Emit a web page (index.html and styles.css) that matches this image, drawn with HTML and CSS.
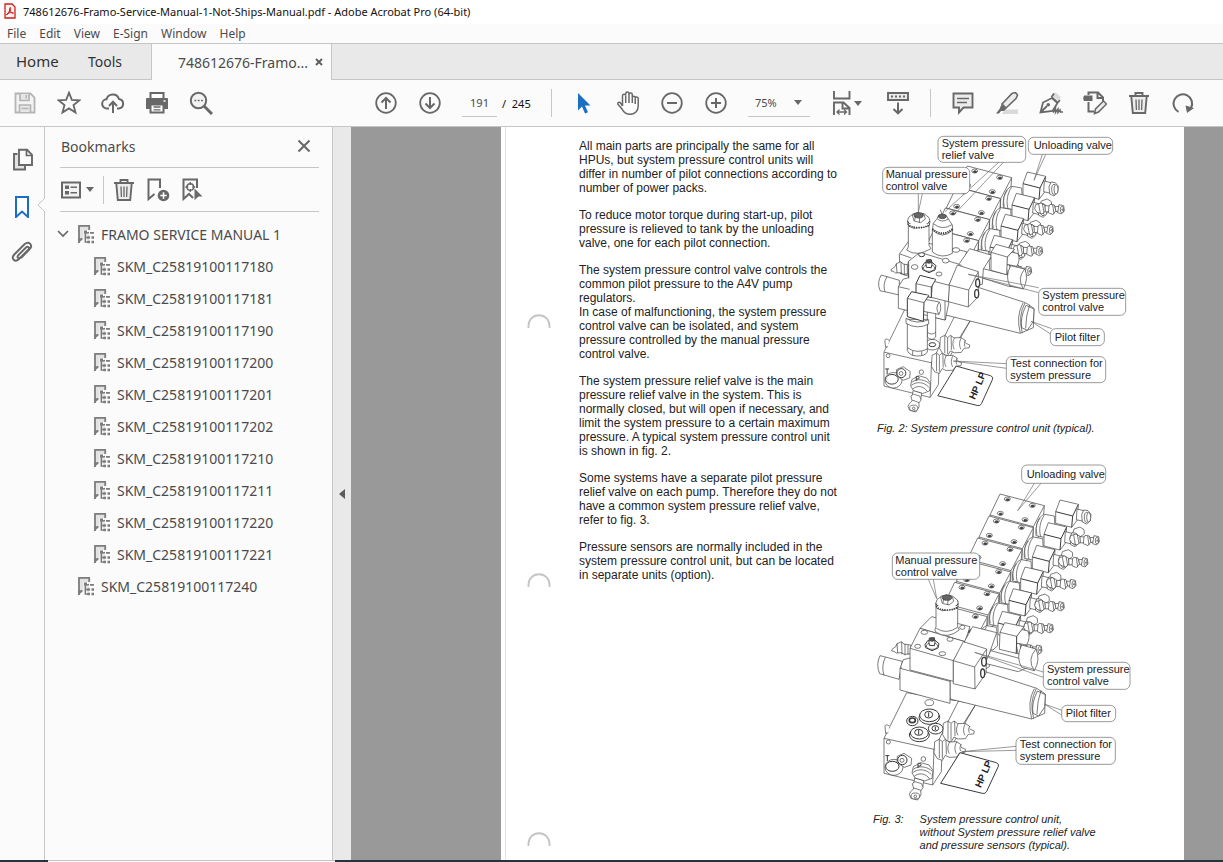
FILE: index.html
```html
<!DOCTYPE html>
<html lang="en">
<head>
<meta charset="utf-8">
<title>748612676-Framo-Service-Manual-1-Not-Ships-Manual.pdf - Adobe Acrobat Pro (64-bit)</title>
<link rel="stylesheet" href="styles.css">
</head>
<body>
<svg class="defs" aria-hidden="true">
  <defs>
    <symbol id="i-node" viewBox="0 0 18 20">
      <path d="M2 1.500h10v16L8 14l-6 4z" fill="#e3e3e3"/>
      <path d="M2 19V1.800h10.200V6" fill="none" stroke="#7c7c7c" stroke-width="1.800"/>
      <path d="M1 19.600v-5L5.500 14v1.500z" fill="#7c7c7c"/>
      <path d="M6.500 6h5v3.500H9v9.500H6.500z" fill="#fbfbfb"/>
      <path d="M8.300 8v10h3M8.300 13.500h3M9 8.700h3" fill="none" stroke="#7c7c7c" stroke-width="1.500"/>
      <path d="M7 6.500h3v3H7zM13 8h4v1.700h-4zM10.500 12.200h2.500v2.500h-2.500zM14.500 12.200H17v2.500h-2.500zM10.500 16.800h2.500v2.500h-2.500zM14.500 16.800H17v2.500h-2.500z" fill="#7c7c7c"/>
    </symbol>
    <symbol id="i-trash" viewBox="0 0 24 24">
      <path d="M4.500 5.500h15L18.300 22H5.700z" fill="#ededed"/>
      <path d="M2 5h20M8.500 4.500V2h7v2.500M4.300 5.500 5.800 22h12.400l1.500-16.500" fill="none" stroke="#686868" stroke-width="1.900"/>
      <path d="m9 8.500.4 10.500M12 8.500V19M15 8.500 14.600 19" fill="none" stroke="#686868" stroke-width="1.300"/>
    </symbol>
    <g id="hole"><ellipse rx="9" ry="6"/><ellipse cx="1" cy="2" rx="5" ry="3" fill="#444"/></g>
    <g id="fitting">
      <path d="M0-12 16-17 28-10 30 7 19 16 4 11-3 0z"/>
      <path d="m9-14 5 28M20-15l5 26"/>
      <path d="M28-9 44-8l4 16-19 2z"/>
      <path d="m43-13 13 2 5 17-9 12-14-6 2-20z"/>
      <path d="m51-12 4 28"/>
      <path d="m58-6 15-1 4 11-16 5z"/>
      <path d="m70-12 14 3 2 16-9 9-11-4z"/>
      <ellipse cx="79" cy="3" rx="5" ry="10"/><circle cx="80" cy="3" r="2"/>
    </g>
    <g id="slab">
      <path d="M390 117 523 152 518 218 488 282 355 247 360 180z"/>
      <path d="m523 152-33 63-130-35m130 35-2 66"/>
      <use href="#hole" x="412" y="132"/><use href="#hole" x="487" y="151"/>
      <use href="#hole" x="391" y="175"/><use href="#hole" x="465" y="194"/>
    </g>
    <g id="coil">
      <path d="m524 178 29 5 3 55-14 13-44-9c-2-30 5-58 26-64z"/>
      <path d="M510 190c-12 16-13 33-9 49m22-58c-13 17-17 43-11 64"/>
      <path d="m612 222 18-6 12 8 1 12-18 14-19-5z"/>
      <path d="M570 135 625 148 622 195 605 217 557 205V170z"/>
      <path d="m557 170 51 13 17-35m-17 35-3 34" stroke-width="3"/>
      <path d="m621 162 20 5-1 32-21-5z"/>
      <path d="m641 165 13 2 9 11-2 19-11 10-13-6-2-22z"/>
      <ellipse cx="650" cy="187" rx="7" ry="15"/><ellipse cx="656" cy="187" rx="6" ry="14"/>
    </g>
    <g id="port">
      <path d="m-42-20 14-7 9 7 9-7 11 8 22-1 13 8 1 9 14 6-2 9-16 1-9 13-22 1-12-6-9 15-15-5-10-17z"/>
      <path d="M-28-26v55M-19-19v50M-8-26l1 44M3-19c-7 11-7 24-1 35M25-20c-8 12-8 25-2 36M38-12c-5 6-5 14-2 20"/>
    </g>
    <g id="drain">
      <path d="m-26-24 22-12 25 7 12 16-3 24-22 8-28-8-10-16z"/>
      <path d="M-26-16C-9-29 17-24 31-10M-28-6C-10-20 14-16 28 0M-24 6C-10-8 12-4 23 13"/>
      <path d="m-22 10 27 8-3 21-28-7z"/>
      <path d="m-29 27 8-6 20 6 4 12-8 11-19-5z"/>
      <path d="m-34 51 11-11 19 7 1 13-10 16-20-5-5-12z"/>
      <ellipse cx="-20" cy="64" rx="13" ry="9"/><circle cx="-20" cy="65" r="4"/>
    </g>
    <g id="manifold">
      <path d="M212 490 270 398 379 428q9 4 6 11L350 514q-4 9-13 6z" stroke-width="3"/>
      <path d="M110 218 318 252 262 340 192 388 188 495 42 460V355z"/>
      <path d="m42 355 150 33 76-150m50 14-70 120M188 495l26-40 2-70"/>
      <path d="M58 318q-12-8-13 2l2 20 8-2"/>
      <circle cx="55" cy="366" r="6"/><circle cx="160" cy="417" r="7"/>
      <ellipse cx="72" cy="442" rx="27" ry="24"/><ellipse cx="67" cy="439" rx="20" ry="15" stroke-width="3"/>
      <path d="m82 409 20-9 23 15-2 20-20 7-22-14z"/>
      <circle cx="97" cy="420" r="14" stroke-width="3"/><circle cx="96" cy="421" r="6"/>
      <use href="#port" x="262" y="330"/><use href="#port" x="236" y="385"/>
      <use href="#drain" x="156" y="464"/>
      <path d="M46 407h12m-6 0v16M144 444v-14h7q5 5 0 8h-7" stroke-width="3"/>
    </g>
    <g id="cap">
      <path d="M-34-4-30-16-15-28 16-27 31-15 34-3 31 10-14 17-30 10z"/>
      <path d="M-33-5C-32 13 31 14 33-5" stroke-width="3"/>
      <path d="M-32 3C-28 19 28 19 32 3" stroke-width="5" stroke-dasharray="4 3"/>
      <path d="m-19-23 17-8 18 6 4 14-14 11-20-5z"/><ellipse cy="-22" rx="14" ry="8" fill="#666"/>
      <path d="m-12-6 2-14m12 20 1-15"/>
    </g>
    <g id="plug"><path d="m-21-2 8-12 22-1 12 10-3 13-18 8-19-9z" stroke-width="3"/><ellipse cy="2" rx="17" ry="10"/><path d="M-9-9-8-22 7-23 9-9 7 1-8 0z" stroke-width="3"/><ellipse cy="-17" rx="7" ry="5" fill="#555"/></g>
    <g id="sidenut"><path d="m-28-5 11-8 4-9 14-6 6 7 21 3 2 26-21 2-10-5-14 1-7-5-7-1z"/><path d="m-13-22 2 28M1-27l1 37m9-31v34m9-31v29"/></g>
  </defs>
</svg>

<div class="app">
  <header class="titlebar">
    <svg class="app-icon" viewBox="0 0 12 16"><path d="M1 1h7l3 3v11H1z" fill="#fff3f1" stroke="#c9221b" stroke-width="1.300"/><path d="M2.500 11.500C5 10 6 7.500 5.800 5c0-1 1.200-.8.8.5C6.300 8.500 3.500 12 2.700 11.800 2 10.500 6.500 9 9.300 9.800c.7.600-.4 1-1.300.2C6.700 9 6 7.500 5.800 6" fill="none" stroke="#c9221b"/></svg>
    <span>748612676-Framo-Service-Manual-1-Not-Ships-Manual.pdf - Adobe Acrobat Pro (64-bit)</span>
  </header>
  <nav class="menubar" aria-label="Application menu">
    <button>File</button><button>Edit</button><button>View</button><button>E-Sign</button><button>Window</button><button>Help</button>
  </nav>
  <div class="tabs">
    <button class="tab-link">Home</button><button class="tab-link">Tools</button>
    <div class="tab-open"><span>748612676-Framo...</span>
      <button class="tab-close" aria-label="Close tab"><svg viewBox="0 0 8 8"><path d="m1 1 6 6m0-6L1 7" stroke="#5c5c5c" stroke-width="1.800"/></svg></button></div>
    <div class="tab-rest"></div>
  </div>

  <div class="toolbar" role="toolbar">
    <div class="tools">
      <button aria-label="Save"><svg viewBox="0 0 24 24"><path d="M2.500 2.500h15l4 4v15h-19z" fill="#f3f3f3" stroke="#b5b5b5" stroke-width="1.800"/><path d="M7 3v6.500h9V3M6.500 21v-7h11v7" fill="#e6e6e6" stroke="#b5b5b5" stroke-width="1.700"/><path d="M13.200 4v3.500M8.500 17.500h7" stroke="#b5b5b5" stroke-width="1.500"/></svg></button>
      <button aria-label="Star"><svg viewBox="0 0 24 24"><path d="m12 1.700 2.800 7.200 7.700.4-6 4.800 2 7.500-6.500-4.200-6.500 4.200 2-7.500-6-4.800 7.700-.4z" fill="none" stroke="#686868" stroke-width="1.800"/></svg></button>
      <button aria-label="Upload"><svg viewBox="0 0 24 24"><path d="M8 17.500H6A4.600 4.600 0 0 1 5.500 8.300 6.500 6.500 0 0 1 18 8a4.800 4.800 0 0 1 0 9.500h-2M12 22V11m-4 4 4-4.200 4 4.200" fill="none" stroke="#686868" stroke-width="2"/></svg></button>
      <button aria-label="Print"><svg viewBox="0 0 24 24"><path d="M1 8q0-1 1-1h20q1 0 1 1v10h-4v-5H5v5H1z" fill="#686868"/><path d="M5.500 7V2h13v5M5.500 13.500h13v8h-13z" fill="#fff" stroke="#686868" stroke-width="2"/><path d="M8.500 16h7m-7 2.800h7" stroke="#686868" stroke-width="1.300"/><path d="M18.500 10h2" stroke="#fff" stroke-width="1.500"/></svg></button>
      <button aria-label="Find"><svg viewBox="0 0 24 24"><circle cx="9.500" cy="9.500" r="7.700" fill="#f2f2f2" stroke="#686868" stroke-width="2"/><path d="m15 15 8 8" stroke="#686868" stroke-width="3"/><path d="M5.500 9.500h8.500" stroke="#686868" stroke-width="1.700" stroke-dasharray="1.800 1.500"/></svg></button>
    </div>
    <div class="tools tools-page">
      <button aria-label="Previous page"><svg viewBox="0 0 24 24"><circle cx="12" cy="12" r="9.800" fill="none" stroke="#686868" stroke-width="1.800"/><path d="M12 18V7.500M7.500 11.500 12 7l4.500 4.500" fill="none" stroke="#686868" stroke-width="2"/></svg></button>
      <button aria-label="Next page"><svg viewBox="0 0 24 24"><circle cx="12" cy="12" r="9.800" fill="none" stroke="#686868" stroke-width="1.800"/><path d="M12 6v10.500M7.500 12.500 12 17l4.500-4.500" fill="none" stroke="#686868" stroke-width="2"/></svg></button>
    </div>
    <input class="page-number" type="text" value="191" aria-label="Page number">
    <span class="page-total">/&nbsp; 245</span>
    <div class="divider"></div>
    <div class="tools">
      <button aria-label="Select"><svg viewBox="0 0 24 24"><path d="M6 2v17.500l4-4 3 7 3-1.300-3-6.700h5.500z" fill="#1b6ec2"/></svg></button>
      <button aria-label="Hand"><svg viewBox="0 0 24 24"><path d="M6.500 15V4.800a1.600 1.600 0 0 1 3.200 0V2.700a1.600 1.600 0 0 1 3.300 0v1a1.600 1.600 0 0 1 3.300 0v2.500a1.600 1.600 0 0 1 3 0L19 7.500a1.600 1.600 0 0 1 3.200.3V15c0 5-3.500 8.300-8 8.300-4 0-6.200-1.800-8-5L1.700 13c0-2 2-2.200 3-.8L6.500 15M9.700 5v7M13 3.500V12m3.300-8v8m2.900-6v7" fill="#fff" stroke="#686868" stroke-width="1.500"/></svg></button>
      <button aria-label="Zoom out"><svg viewBox="0 0 24 24"><circle cx="12" cy="12" r="9.800" fill="none" stroke="#686868" stroke-width="1.800"/><path d="M7 12h10" stroke="#686868" stroke-width="2"/></svg></button>
      <button aria-label="Zoom in"><svg viewBox="0 0 24 24"><circle cx="12" cy="12" r="9.800" fill="none" stroke="#686868" stroke-width="1.800"/><path d="M7 12h10M12 7v10" stroke="#686868" stroke-width="2"/></svg></button>
    </div>
    <label class="zoom"><select aria-label="Zoom level"><option>75%</option><option>100%</option></select><svg class="caret" viewBox="0 0 8 5"><path d="M0 0h8L4 5z" fill="#686868"/></svg></label>
    <div class="tools tools-view">
      <button class="with-caret" aria-label="Fit page"><svg viewBox="0 0 24 24"><path d="M4 0v7.500h15.500V0" fill="none" stroke="#686868" stroke-width="1.900"/><path d="M4 24V11.500h9.500l6 5.500v7M12.500 12v5.500h6.500" fill="none" stroke="#686868" stroke-width="1.900"/><path d="M7 21h9.500M9.500 18.500 7 21l2.500 2.500m4.500-5 2.500 2.500-2.500 2.500" fill="none" stroke="#686868" stroke-width="1.300"/></svg><svg class="caret" viewBox="0 0 8 5"><path d="M0 0h8L4 5z" fill="#686868"/></svg></button>
      <button aria-label="Scrolling"><svg viewBox="0 0 24 24"><path d="M2 2h20v7H2z" fill="#ececec" stroke="#686868" stroke-width="1.900"/><path d="M5 5.500h14" stroke="#686868" stroke-width="2" stroke-dasharray="2 2"/><path d="M12 11.500V22m-4.500-4L12 22.300l4.500-4.300" fill="none" stroke="#686868" stroke-width="2"/></svg></button>
    </div>
    <div class="divider divider-end"></div>
    <div class="tools">
      <button aria-label="Comment"><svg viewBox="0 0 24 24"><path d="M2.500 2.500h19v14h-9L8 21.500v-5H2.500z" fill="#ececec" stroke="#686868" stroke-width="1.900"/><path d="M6 7.500h12M6 11.500h10" stroke="#686868" stroke-width="1.500"/></svg></button>
      <button aria-label="Highlight"><svg viewBox="0 0 24 24"><path d="M10 18.500h13V23H7z" fill="#d9d9d9"/><path d="M7 13 17 2.500q4-2 5.500 1.500L21 7.500 11 17z" fill="#ececec" stroke="#686868" stroke-width="1.600"/><path d="m6.500 13.500 5 4L9 20H6l-2 2.500H1L4.500 18z" fill="#686868"/></svg></button>
      <button aria-label="Sign"><svg viewBox="0 0 24 24"><path d="m14 5 2-4 6 5-3 4z" fill="#dcdcdc"/><path d="M1.500 21.500 4 11.500l9-4.500 5.500 5-5 8zM1.500 21.500 8 15M12.500 6 15 2.500M18 12.500 21 9M12.500 6l6.500 6" fill="none" stroke="#686868" stroke-width="1.800"/><circle cx="9.300" cy="13.800" r="1.800" fill="#686868"/><path d="m14 21.500 2.500-4v4l2.500-3.500v3.500l2-2.500.5 2H24" fill="none" stroke="#686868" stroke-width="1.500"/></svg></button>
      <button aria-label="Edit PDF"><svg viewBox="0 0 24 24"><path d="M5.500 4V1.500h9.500l5 5V10M5.500 11v9.500H11M14.500 1.500V7h5.500" fill="none" stroke="#686868" stroke-width="2"/><path d="M1 4.500h8.500v5.500H1q-1.500-2.700 0-5.500z" fill="#686868"/><path d="m11.500 22.500 1-4.500 8-8 3 3-8 8z" fill="#eee" stroke="#686868" stroke-width="1.500"/></svg></button>
      <button aria-label="Delete"><svg viewBox="0 0 24 24"><use href="#i-trash"/></svg></button>
      <button aria-label="Rotate"><svg viewBox="0 0 24 24"><path d="M7.500 20.800A9.300 9.300 0 1 1 20 17" fill="none" stroke="#686868" stroke-width="2"/><path d="m14.500 14.500 8.500 2.500-7 5z" fill="#686868"/></svg></button>
    </div>
  </div>

  <main class="workspace">
    <nav class="rail" aria-label="Navigation panes">
      <button aria-label="Page thumbnails"><svg viewBox="0 0 24 24"><path d="M7.500 6H4v15.500h11V18" fill="#e3e3e3" stroke="#686868" stroke-width="1.900"/><path d="M9 1.800h8l5 5V17H9z" fill="#fbfbfb" stroke="#686868" stroke-width="1.900"/><path d="M16.500 2v5.500H22" fill="none" stroke="#686868" stroke-width="1.700"/></svg></button>
      <button class="rail-active" aria-label="Bookmarks"><svg viewBox="0 0 24 24"><path d="M6 3h12v20l-6-5.500L6 23z" fill="#fff" stroke="#1b6ec2" stroke-width="2"/></svg><svg class="notch" viewBox="0 0 8 16"><path d="M8 1 1 8l7 7" fill="#fbfbfb" stroke="#c6c6c6"/></svg></button>
      <button aria-label="Attachments"><svg viewBox="0 0 24 24"><path d="m8 15.500 8-8c2-2 4 .5 2.300 2.300L9 19c-4 4-8.500-.5-4.700-4.500L14.500 4.300c4.500-4 9 1 5 5L11 18M8 15.500c-1.500 2 .8 3.500 2.300 2" fill="none" stroke="#686868" stroke-width="1.900"/></svg></button>
    </nav>

    <aside class="panel">
      <div class="panel-head"><h2>Bookmarks</h2><button aria-label="Close panel"><svg viewBox="0 0 14 14"><path d="m1.500 1.500 11 11m0-11-11 11" stroke="#686868" stroke-width="2"/></svg></button></div>
      <div class="panel-tools">
        <button class="options" aria-label="Options"><svg viewBox="0 0 24 24"><path d="M3 4.500h18v15H3z" fill="#f3f3f3" stroke="#686868" stroke-width="2"/><path d="M6 7.500h4v3.500H6zm0 5.500h4v3.500H6z" fill="#686868"/><path d="M11.500 9.300H18m-6.500 5.500H18" stroke="#686868" stroke-width="1.600"/></svg><svg class="caret" viewBox="0 0 8 5"><path d="M0 0h8L4 5z" fill="#686868"/></svg></button>
        <button aria-label="Delete bookmark"><svg viewBox="0 0 24 24"><use href="#i-trash"/></svg></button>
        <button aria-label="New bookmark"><svg viewBox="0 0 24 24"><path d="M14 10V1.500H2.500V21l6-5" fill="none" stroke="#686868" stroke-width="2"/><circle cx="17.500" cy="17.500" r="5.800" fill="#686868"/><path d="M14.300 17.500h6.400M17.500 14.300v6.400" stroke="#fff" stroke-width="1.600"/></svg></button>
        <button aria-label="Find current bookmark"><svg viewBox="0 0 24 24"><path d="M17 10V1.500H3.500V21l5.500-5 4 4" fill="none" stroke="#686868" stroke-width="2"/><circle cx="10.300" cy="9" r="3.300" fill="#fff" stroke="#686868" stroke-width="1.500"/><path d="M10.300 4v3m0 4v3M5.300 9h3m4 0h3" stroke="#686868" stroke-width="1.300"/><path d="m14.500 10.500 8 8h-4l-4 3.800z" fill="#686868"/></svg></button>
      </div>
      <ul class="tree">
        <li>
          <div class="node"><button class="twist" aria-label="Collapse"><svg viewBox="0 0 12 8"><path d="m1 1 5 5 5-5" fill="none" stroke="#686868" stroke-width="1.700"/></svg></button><svg class="node-icon"><use href="#i-node"/></svg><a href="#">FRAMO SERVICE MANUAL 1</a></div>
          <ul>
            <li class="node"><svg class="node-icon"><use href="#i-node"/></svg><a href="#">SKM_C25819100117180</a></li>
            <li class="node"><svg class="node-icon"><use href="#i-node"/></svg><a href="#">SKM_C25819100117181</a></li>
            <li class="node"><svg class="node-icon"><use href="#i-node"/></svg><a href="#">SKM_C25819100117190</a></li>
            <li class="node"><svg class="node-icon"><use href="#i-node"/></svg><a href="#">SKM_C25819100117200</a></li>
            <li class="node"><svg class="node-icon"><use href="#i-node"/></svg><a href="#">SKM_C25819100117201</a></li>
            <li class="node"><svg class="node-icon"><use href="#i-node"/></svg><a href="#">SKM_C25819100117202</a></li>
            <li class="node"><svg class="node-icon"><use href="#i-node"/></svg><a href="#">SKM_C25819100117210</a></li>
            <li class="node"><svg class="node-icon"><use href="#i-node"/></svg><a href="#">SKM_C25819100117211</a></li>
            <li class="node"><svg class="node-icon"><use href="#i-node"/></svg><a href="#">SKM_C25819100117220</a></li>
            <li class="node"><svg class="node-icon"><use href="#i-node"/></svg><a href="#">SKM_C25819100117221</a></li>
          </ul>
        </li>
        <li class="node node-root"><svg class="node-icon"><use href="#i-node"/></svg><a href="#">SKM_C25819100117240</a></li>
      </ul>
    </aside>

    <button class="gutter" aria-label="Collapse panel"><svg viewBox="0 0 6 10"><path d="M6 0v10L0 5z" fill="#5c5c5c"/></svg></button>

    <section class="viewer">
      <article class="sheet">
        <div class="binding">
          <svg viewBox="0 0 24 14"><path d="M1.500 14C0-3 24-3 22.500 14" fill="none" stroke="#c4c4c4" stroke-width="1.800"/></svg>
          <svg viewBox="0 0 24 14"><path d="M1.500 14C0-3 24-3 22.500 14" fill="none" stroke="#c4c4c4" stroke-width="1.800"/></svg>
          <svg viewBox="0 0 24 14"><path d="M1.500 14C0-3 24-3 22.500 14" fill="none" stroke="#c4c4c4" stroke-width="1.800"/></svg>
        </div>
        <div class="copy">
          <p>All main parts are principally the same for all<br>HPUs, but system pressure control units will<br>differ in number of pilot connections according to<br>number of power packs.</p>
          <p>To reduce motor torque during start-up, pilot<br>pressure is relieved to tank by the unloading<br>valve, one for each pilot connection.</p>
          <p>The system pressure control valve controls the<br>common pilot pressure to the A4V pump<br>regulators.<br>In case of malfunctioning, the system pressure<br>control valve can be isolated, and system<br>pressure controlled by the manual pressure<br>control valve.</p>
          <p>The system pressure relief valve is the main<br>pressure relief valve in the system. This is<br>normally closed, but will open if necessary, and<br>limit the system pressure to a certain maximum<br>pressure. A typical system pressure control unit<br>is shown in fig. 2.</p>
          <p>Some systems have a separate pilot pressure<br>relief valve on each pump. Therefore they do not<br>have a common system pressure relief valve,<br>refer to fig. 3.</p>
          <p>Pressure sensors are normally included in the<br>system pressure control unit, but can be located<br>in separate units (option).</p>
        </div>
        <div class="figures">
          <figure>
            <svg class="drawing" viewBox="0 0 810 870">
              <g class="ink">
                <use href="#slab" x="-98" y="0"/><use href="#coil" x="-98" y="0"/>
                <use href="#slab" x="-131" y="63"/><use href="#coil" x="-131" y="64"/><use href="#fitting" x="497" y="245"/>
                <use href="#slab" x="-164" y="126"/><use href="#coil" x="-164" y="127"/><use href="#fitting" x="464" y="307"/>
                <use href="#slab" x="-197" y="189"/><use href="#coil" x="-197" y="190"/><use href="#fitting" x="432" y="370"/>
                <use href="#fitting" x="399" y="430"/>
                <use href="#manifold" transform="translate(2 331) scale(.95 .97)"/>
              </g>
              <g class="ink" transform="translate(-34 322)">
                <path d="M340 153 500 205 526 222 524 280 485 297 240 237 240 170z"/><path d="M493 206q-22 40-8 90m14-90q-22 40-8 90m11-83 24 11-2 37-18 27-17-8q-5-30 13-67zm11-2-9 35-3 36"/>
              </g>
              <g class="ink" transform="translate(0 234)">
                <path d="M88 147 120 103 290 140 275 190 120 215 90 205z"/><path d="m90 147 34 12"/>
                <path d="M335 190 415 210 442 222V246L415 244 325 215z"/>
                <path d="m422 182 42 10q13 26-4 60l-40-9q-16-28 2-61z"/><path d="M464 192q-24 28-4 60"/>
                <path d="M268 176 299 131 366 151 340 192 337 238 325 240z"/>
                <path d="m412 138 32 8q8 20-4 38l-30-6z"/>
                <path d="M363 142 378 118 433 133 412 156 410 209 363 196z"/><path d="m363 142 49 14 21-23"/>
                <ellipse cx="187" cy="419" rx="22" ry="16"/><ellipse cx="187" cy="419" rx="10" ry="6" stroke-width="3"/>
                <path d="m34 210 54 16v44l-58-13q-10-26 4-47z"/><path d="M51 215q-14 24-6 45"/>
                <use href="#sidenut" x="92" y="198"/>
                <path d="M114 170 150 142 268 178 237 240V290L226 345 85 310V245L100 222 116 218z"/>
                <path d="m85 245 34 8m-3-83v50m109 62v63l-42-10"/>
                <path d="M237 240 262 180 325 200 325 275 295 306 235 290z"/><path d="m237 240 59 15 29-55m-29 55-1 51"/>
                <ellipse cx="323" cy="234" rx="6" ry="12" stroke-width="4"/><ellipse cx="320" cy="266" rx="6" ry="12" stroke-width="4"/>
                <path d="m188 228 50 13-3 49-51-13z"/>
                <path d="M138 236 150 211 197 223 184 246V278L138 265z" stroke-width="3"/><path d="m138 236 46 10 13-23"/>
                <path d="M172 320V396q14 14 25 0V320z"/><path d="M172 382q13 10 25 0"/>
                <path d="M112 343V437q8 16 30 16 23 0 30-12V343z"/><path d="M108 340q32 20 68 4v13q-34 18-68-2zM112 428q28 20 60 4m-44 6v13m27-12v12"/>
                <path d="m160 282 48 9q9 18-1 37l-47-9z"/><path d="M208 291q-14 18-1 37"/>
                <path d="M112 280 125 260 176 271 162 293 160 349 112 335z" stroke-width="3"/><path d="m112 280 50 13 14-22"/>
                <ellipse cx="155" cy="149" rx="9" ry="6" stroke-width="3"/><ellipse cx="258" cy="135" rx="11" ry="7"/><ellipse cx="134" cy="186" rx="10" ry="7"/><ellipse cx="227" cy="167" rx="10" ry="7"/><ellipse cx="207" cy="207" rx="9" ry="6"/>
                <use href="#plug" x="177" y="187"/>
                <path d="M115 55v71l-5 9q30 22 73-4l-6-10V55z"/>
                <use href="#cap" x="146" y="53"/>
                <path d="M187 75v66q28 22 60 4V75z"/>
                <path d="M187 75 190 55 202 40 205 32 229 32 235 42 247 60 248 75q-30 30-61 0z"/>
                <path d="M190 56q26 22 56 3M202 42q15 12 33 0"/>
                <path d="M187 72q30 26 61 0" stroke-width="6" stroke-dasharray="4 3"/>
                <ellipse cx="217" cy="34" rx="12" ry="7" fill="#666"/><path d="m216 28-5-14"/>
              </g>
              <g class="callout">
                <path d="m388 104-163 150m177-150L256 259M517 82l-25 78 35-78M145 200v56l12-56M506 482 295 442l211 55M545 605l-62-22 62 40M410 710 250 702l160 22"/>
                <rect x="204" y="28" width="263" height="78" rx="16"/><rect x="475" y="31" width="253" height="51" rx="16"/><rect x="38" y="121" width="261" height="79" rx="16"/>
                <rect x="506" y="484" width="261" height="81" rx="16"/><rect x="541" y="605" width="162" height="51" rx="16"/><rect x="409" y="689" width="298" height="78" rx="16"/>
              </g>
              <g class="label">
                <text x="215" y="59">System pressure</text><text x="215" y="97">relief valve</text><text x="491" y="66">Unloading valve</text>
                <text x="47" y="153">Manual pressure</text><text x="47" y="190">control valve</text>
                <text x="517" y="516">System pressure</text><text x="517" y="553">control valve</text><text x="554" y="642">Pilot filter</text>
                <text x="421" y="720">Test connection for</text><text x="421" y="757">system pressure</text>
                <text class="tag" transform="translate(314 819) rotate(-66)">HP LP</text>
              </g>
            </svg>
            <figcaption class="caption-short">Fig. 2: System pressure control unit (typical).</figcaption>
          </figure>
          <figure>
            <svg class="drawing" viewBox="0 0 810 1074">
              <g class="ink">
                <use href="#slab"/><use href="#coil"/>
                <use href="#slab" x="-33" y="66"/><use href="#coil" x="-35" y="68"/><use href="#fitting" x="602" y="254"/>
                <use href="#slab" x="-67" y="132"/><use href="#coil" x="-70" y="136"/><use href="#fitting" x="568" y="320"/>
                <use href="#slab" x="-101" y="199"/><use href="#coil" x="-105" y="201"/><use href="#fitting" x="532" y="385"/>
                <use href="#slab" x="-136" y="265"/><use href="#coil" x="-140" y="266"/><use href="#fitting" x="497" y="452"/>
                <use href="#slab" x="-171" y="333"/><use href="#coil" x="-173" y="334"/><use href="#fitting" x="464" y="518"/>
                <use href="#fitting" x="430" y="582"/>
                <g transform="translate(0 495)">
                  <path d="M150 25 185-10 300 20 285 65z"/>
                  <path d="M283 65 308 20 380 38 360 95 358 140 340 150z"/>
                  <path d="M362 92 448 115 455 80 490 90 500 130 445 155 345 130z"/>
                  <path d="m455 75 43 12q14 32-5 65l-38-10q-18-30 0-67z"/><path d="M498 87q-28 32-5 65"/>
                  <path d="m440 25 34 8q8 20-4 42l-32-6z"/>
                  <path d="M390 37 404 8 462 20 440 48 439 100 388 88z"/><path d="m390 37 50 12 22-29m-22 29-1 51"/>
                  <use href="#manifold"/>
                  <ellipse cx="178" cy="248" rx="13" ry="9"/>
                  <g stroke-width="3"><ellipse cx="178" cy="292" rx="31" ry="21"/><ellipse cx="178" cy="286" rx="29" ry="19"/><ellipse cx="176" cy="284" rx="12" ry="10"/><ellipse cx="127" cy="303" rx="17" ry="14"/><ellipse cx="127" cy="301" rx="9" ry="7" stroke-width="5"/><ellipse cx="197" cy="326" rx="22" ry="16"/><ellipse cx="196" cy="325" rx="10" ry="8"/><ellipse cx="148" cy="345" rx="30" ry="20"/><ellipse cx="148" cy="339" rx="27" ry="18"/><ellipse cx="146" cy="337" rx="12" ry="9"/><path d="M176 277v14m-30-40M146 330v14m50-24v10"/></g>
                  <path d="M340 153 500 205 526 222 524 280 485 297 240 237 240 170z"/><path d="M493 206q-22 40-8 90m14-90q-22 40-8 90m11-83 24 11-2 37-18 27-17-8q-5-30 13-67zm11-2-9 35-3 36"/>
                  <path d="m30 107 67 17-10 54-58-17q-12-27 1-54z"/><path d="M46 112q-13 27-4 54"/>
                  <use href="#sidenut" x="94" y="93"/>
                  <path d="M90 145 240 184V250L90 210z"/><path d="m90 145 10-26 20-5"/>
                  <path d="M150 25 285 65 250 122V184L120 150V85z"/><path d="m120 85 130 37"/>
                  <path d="M250 122 280 65 350 87 348 160 315 207 250 191z"/><path d="m250 122 64 19 36-54m-36 54 1 66"/>
                  <ellipse cx="342" cy="125" rx="7" ry="13" stroke-width="4"/><ellipse cx="338" cy="160" rx="6" ry="13" stroke-width="4"/>
                  <ellipse cx="163" cy="37" rx="10" ry="6"/><ellipse cx="143" cy="79" rx="9" ry="6"/><ellipse cx="240" cy="58" rx="9" ry="6"/><ellipse cx="217" cy="101" rx="10" ry="6"/><ellipse cx="277" cy="22" rx="8" ry="6"/>
                  <use href="#plug" x="186" y="76"/>
                  <path d="M198-50V20q-5 10-2 15 35 25 72-5l-5-10v-70z"/><path d="M199 25q30 20 64-3"/>
                </g>
                <use href="#cap" x="231" y="450"/>
              </g>
              <g class="callout">
                <path d="m493 85-50 82 70-82M175 373l25 58-10-58M520 651 314 592l206 75M576 766l-53-19 50 32M438 874l-163 16 163-4"/>
                <rect x="455" y="30" width="252" height="55" rx="16"/><rect x="67" y="294" width="262" height="79" rx="16"/>
                <rect x="520" y="622" width="260" height="81" rx="16"/><rect x="575" y="751" width="162" height="49" rx="16"/><rect x="438" y="847" width="298" height="81" rx="16"/>
              </g>
              <g class="label">
                <text x="470" y="68">Unloading valve</text><text x="76" y="327">Manual pressure</text><text x="76" y="363">control valve</text>
                <text x="531" y="653">System pressure</text><text x="531" y="689">control valve</text><text x="587" y="787">Pilot filter</text>
                <text x="449" y="879">Test connection for</text><text x="449" y="914">system pressure</text>
                <text class="tag" transform="translate(332 1000) rotate(-66)">HP LP</text>
              </g>
            </svg>
            <figcaption class="caption-long"><span>Fig. 3:</span><span>System pressure control unit,<br>without System pressure relief valve<br>and pressure sensors (typical).</span></figcaption>
          </figure>
        </div>
      </article>
    </section>
  </main>
  <footer class="edge"><div></div></footer>
</div>
</body>
</html>
```
FILE: styles.css
```css
* { box-sizing: border-box; }
body { margin: 0; background: #fbfbfb; color: #4b4b4b; font-family: "Segoe UI", "Noto Sans", "Open Sans", sans-serif; }
button, input, select { font: inherit; color: inherit; background: none; border: 0; padding: 0; margin: 0; }
svg { display: block; flex: none; }
ul { list-style: none; margin: 0; padding: 0; }
.defs { position: absolute; width: 0; height: 0; }
.app { display: flex; flex-direction: column; height: 100vh; overflow: hidden; }

.titlebar { display: flex; align-items: center; gap: 7px; height: 24px; padding: 0 0 2px 4px; background: #fff; color: #111; font-size: 11px; white-space: nowrap; }
.app-icon { width: 12px; height: 16px; }
.menubar { display: flex; gap: 13px; height: 19px; padding-left: 7px; font-size: 12px; line-height: 17px; }

.tabs { display: flex; height: 37px; border-top: 1px solid #c6c6c6; background: #e9e9e9; font-size: 14px; }
.tab-link { width: 68px; padding: 0 0 1px 16px; border-bottom: 1px solid #c6c6c6; text-align: left; color: #333; font-size: 15px; }
.tab-link + .tab-link { width: 83px; padding-left: 20px; font-size: 14px; }
.tab-open { display: flex; align-items: center; justify-content: space-between; width: 181px; padding: 0 8px 0 26px; border: solid #c6c6c6; border-width: 0 1px; background: #fbfbfb; }
.tab-close svg { width: 8px; height: 8px; }
.tab-rest { flex: 1; border-bottom: 1px solid #c6c6c6; }

.toolbar { display: flex; align-items: center; flex: none; height: 47px; padding-left: 3px; border-bottom: 1px solid #c6c6c6; font-size: 12px; }
.tools { display: flex; }
.tools button { display: flex; align-items: center; justify-content: center; width: 44px; height: 40px; }
.tools button svg { width: 24px; height: 24px; }
.tools-page { margin-left: 141px; }
.page-number { width: 35px; height: 28px; margin-left: 10px; border-bottom: 1px solid #c6c6c6; text-align: center; font-size: 11px; }
.page-total { width: 36px; margin-left: 5px; color: #111; font-size: 11px; white-space: nowrap; }
.divider { width: 1px; height: 28px; margin: 0 10px 0 13px; background: #c6c6c6; }
.zoom { display: flex; align-items: center; width: 62px; height: 28px; margin-left: 10px; padding: 0 8px 0 7px; border-bottom: 1px solid #c6c6c6; }
.zoom select { width: 39px; appearance: none; font-size: 11px; }
.caret, .tools button .caret { width: 8px; height: 5px; }
.tools-view { margin-left: 20px; }
.tools-view .with-caret { justify-content: flex-start; width: 46px; }
.divider-end { margin: 0 10px; }

.workspace { display: flex; flex: 1; min-height: 0; }
.rail { display: flex; flex-direction: column; flex: none; width: 45px; padding-top: 10px; border-right: 1px solid #c6c6c6; }
.rail button { position: relative; display: flex; align-items: center; justify-content: center; height: 46px; }
.rail button svg { width: 24px; height: 24px; }
.rail .rail-active .notch { position: absolute; right: -1px; top: 14px; width: 8px; height: 16px; }
.panel { flex: none; width: 288px; padding: 0 13px 0 15px; border-right: 1px solid #c6c6c6; }
.panel-head { display: flex; align-items: center; justify-content: space-between; height: 41px; padding: 0 8px 2px 0; border-bottom: 1px solid #c6c6c6; }
.panel-head h2 { margin: 0; padding-left: 1px; font-size: 14px; font-weight: 400; }
.panel-head svg { width: 14px; height: 14px; }
.panel-tools { display: flex; align-items: center; height: 44px; border-bottom: 1px solid #c6c6c6; }
.panel-tools button { display: flex; align-items: center; justify-content: center; width: 34px; height: 28px; }
.panel-tools svg { width: 24px; height: 24px; }
.panel-tools .options { width: 44px; margin-right: 3px; padding-right: 11px; border-right: 1px solid #c6c6c6; gap: 3px; }
.panel-tools .caret { width: 8px; height: 5px; }
.tree { padding-top: 6px; font-size: 14px; }
.node { display: flex; align-items: center; height: 32px; }
.node-icon { width: 18px; height: 20px; margin-right: 6px; }
.node a { color: inherit; text-decoration: none; white-space: nowrap; }
.twist { width: 20px; margin-left: -3px; }
.twist svg { width: 12px; height: 8px; }
.tree ul { padding-left: 33px; }
.node-root { padding-left: 17px; }
.gutter { display: flex; align-items: center; justify-content: center; flex: none; width: 18px; background: #e9e9e9; }
.gutter svg { width: 6px; height: 10px; }

.viewer { flex: 1; min-width: 0; padding: 0 39px 0 150px; overflow: hidden; background: #999; }
.sheet { display: flex; min-height: 100%; padding-left: 4px; background: #fff; color: #222; font: 12px/14px "Liberation Sans", Arial, sans-serif; }
.binding { display: flex; flex-direction: column; gap: 245px; flex: none; width: 74px; padding: 187px 0 0 21px; border-left: 1px solid #e2e2e2; }
.binding svg { width: 24px; height: 14px; }
.copy { flex: none; width: 291px; padding-top: 12px; }
.copy p { margin: 0 0 13px; white-space: nowrap; }
.figures { flex: 1; min-width: 0; }
.figures figure { margin: 0 0 20px; }
.drawing { width: 270px; height: auto; }
.figures figcaption { font-size: 11px; line-height: 13px; font-style: italic; white-space: nowrap; }
.caption-short { padding: 5px 0 0 7px; }
.caption-long { display: flex; gap: 16px; padding-left: 3px; }
.ink { fill: #fff; stroke: #3a3a3a; stroke-width: 2px; stroke-linejoin: round; }
.callout { fill: #fff; stroke: #666; stroke-width: 2px; stroke-linejoin: round; }
.callout path { fill: none; }
.label { fill: #222; font: 33px "Liberation Sans", Arial, sans-serif; }
.label .tag { font-size: 29px; font-weight: bold; }

.edge { flex: none; height: 2px; padding-left: 48px; background: #24343d; }
.edge div { width: 287px; height: 2px; border-top: 1px solid #c6c6c6; background: #fff; }
```
